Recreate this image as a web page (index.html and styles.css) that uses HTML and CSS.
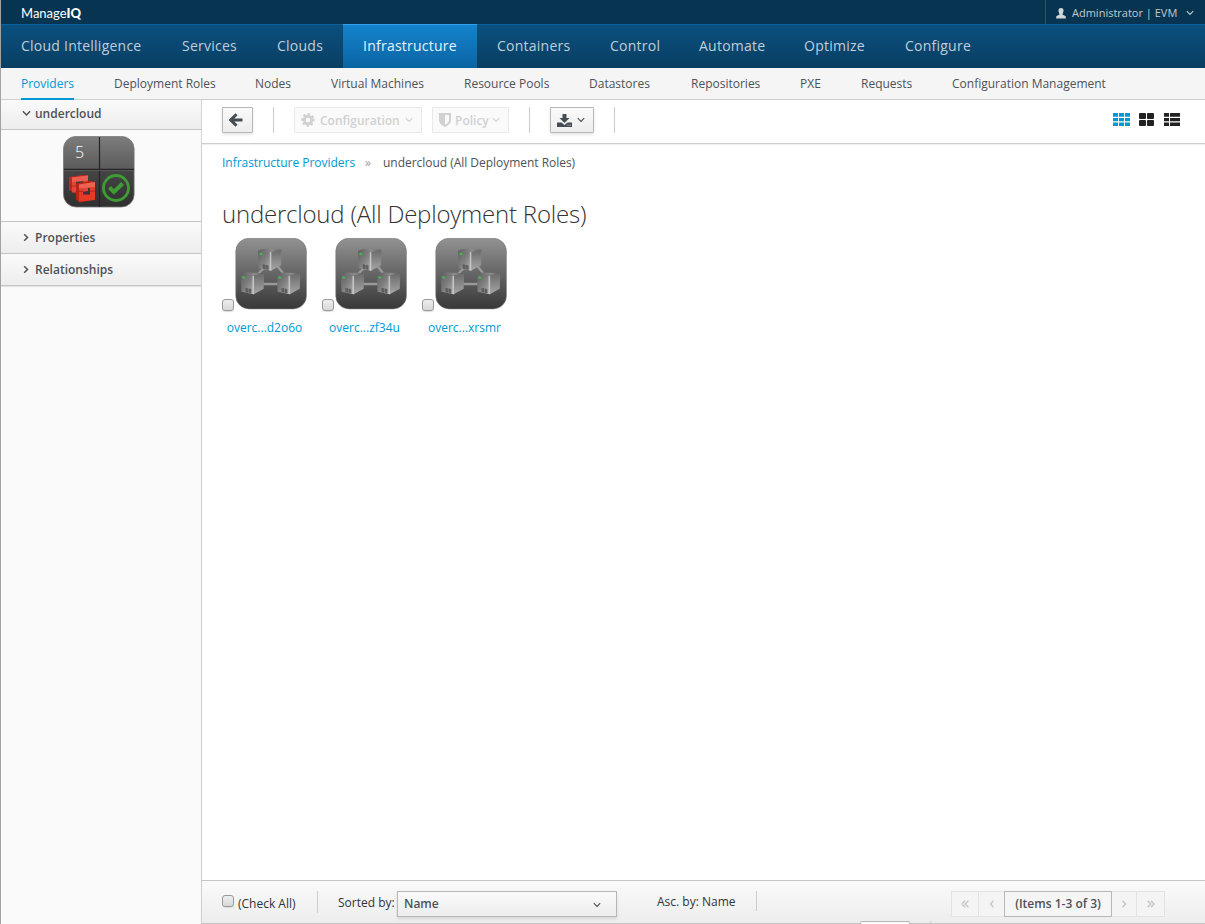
FILE: index.html
```
<!DOCTYPE html>
<html lang="en">
<head>
<meta charset="utf-8">
<title>ManageIQ</title>
<link rel="stylesheet" href="styles.css">
</head>
<body>
<svg class="defs" width="0" height="0" aria-hidden="true">
  <defs>
    <linearGradient id="tile" x1="0" y1="0" x2="0" y2="1"><stop offset="0" stop-color="#929292"/><stop offset=".5" stop-color="#656565"/><stop offset="1" stop-color="#383838"/></linearGradient>
    <linearGradient id="quad" x1="0" y1="0" x2="0" y2="1"><stop offset="0" stop-color="#7d7d7d"/><stop offset=".46" stop-color="#5b5b5b"/><stop offset=".48" stop-color="#454545"/><stop offset="1" stop-color="#303030"/></linearGradient>
    <linearGradient id="front" x1="0" y1="0" x2="1" y2="1"><stop offset="0" stop-color="#606060"/><stop offset=".5" stop-color="#808080"/><stop offset="1" stop-color="#b4b4b4"/></linearGradient>
    <linearGradient id="side" x1="0" y1="0" x2="0" y2="1"><stop offset="0" stop-color="#6a6a6a"/><stop offset="1" stop-color="#a6a6a6"/></linearGradient>
    <linearGradient id="lid" x1="0" y1="0" x2="1" y2="0"><stop offset="0" stop-color="#5c5c5c"/><stop offset=".6" stop-color="#8c8c8c"/><stop offset="1" stop-color="#5a5a5a"/></linearGradient>
    <symbol id="chev-down" viewBox="0 0 8 6"><path d="M.8 1.200 4 4.400 7.200 1.200" fill="none" stroke="currentColor" stroke-width="1.100"/></symbol>
    <symbol id="chev-right" viewBox="0 0 6 8"><path d="M1.200.8 4.500 4 1.200 7.200" fill="none" stroke="currentColor" stroke-width="1.500"/></symbol>
    <symbol id="server" viewBox="0 0 24 23">
      <path d="M0 2 6 0 23.500 1 13 3.500z" fill="url(#lid)"/>
      <path d="M0 2 13 3.500V22L.8 19.500z" fill="url(#front)"/>
      <path d="M13 3.500 23.500 1 23 16.500 13 22z" fill="url(#side)"/>
      <path d="M11.800 3.400 13.300 3.600V22l-1.500-.3z" fill="#c6c6c6"/>
      <path d="M5 16l2.200.4v3.600L5 19.500zM8.200 16.600l2 .4v3.700l-2-.4z" fill="#666" stroke="#4d4d4d" stroke-width=".5"/>
      <path d="M1.500 4 4.200 4.400v2L1.500 6z" fill="#3cc247"/>
    </symbol>
    <symbol id="role" viewBox="0 0 72 72">
      <rect x=".8" y=".3" width="70.600" height="70.600" rx="13" fill="url(#tile)" stroke="#777" stroke-width=".6"/>
      <path d="M23 36 31 28M40 25 48 35M28 46H43" stroke="#999" stroke-width="2.400"/>
      <use href="#server" x="23" y="10.700" width="24" height="23"/>
      <use href="#server" x="5.700" y="34.300" width="24" height="23"/>
      <use href="#server" x="41.800" y="34.300" width="24" height="23"/>
    </symbol>
  </defs>
</svg>
<div class="app">
  <header class="topbar">
    <div class="brand">Manage<b>IQ</b></div>
    <div class="user">
      <svg width="10" height="11" viewBox="0 0 10 11"><path d="M5 0c1.800 0 2.700 1.200 2.500 3-.1 1.700-.9 2.500-1 3.300 0 1 2.500 1 3.300 2.200V10.500H.2V8.500C1 7.300 3.500 7.300 3.500 6.300 3.400 5.500 2.600 4.700 2.500 3 2.300 1.200 3.200 0 5 0z" fill="#d0d5d9"/></svg>
      <span class="uname">Administrator | EVM</span>
      <svg width="8" height="6"><use href="#chev-down"/></svg>
    </div>
  </header>
  <nav class="mainnav">
    <a>Cloud Intelligence</a><a>Services</a><a>Clouds</a><a class="on">Infrastructure</a><a>Containers</a><a>Control</a><a>Automate</a><a>Optimize</a><a>Configure</a>
  </nav>
  <nav class="subnav">
    <a class="on">Providers</a><a>Deployment Roles</a><a>Nodes</a><a>Virtual Machines</a><a>Resource Pools</a><a>Datastores</a><a>Repositories</a><a>PXE</a><a>Requests</a><a>Configuration Management</a>
  </nav>
  <div class="body">
    <aside class="side">
      <div class="acc first"><svg width="9" height="7" viewBox="0 0 8 6"><path d="M.8 1 4 4.300 7.200 1" fill="none" stroke="currentColor" stroke-width="1.300"/></svg>undercloud</div>
      <div class="summary">
        <svg width="72" height="73" viewBox="0 0 72 73">
          <rect x=".5" y=".4" width="70.600" height="70.600" rx="12.500" fill="url(#quad)" stroke="#777" stroke-width=".8"/>
          <path d="M36.500 1V71M1 33.300H71" stroke="#242424" stroke-width="1.200"/><path d="M1 34.500H71" stroke="#666" stroke-width=".6"/>
          <text class="count" x="12" y="22">5</text>
          <g fill-rule="evenodd">
            <path d="M6 41 21 38.700 25 40V55L12 57.500 6 54z M12 45V51.500H20V45z" fill="#b92b1d"/>
            <path d="M9 41.500 25 39.500V55L9 56.500z M13 45.500V52H20.500V45z" fill="#e0463a"/>
            <path d="M9 41.500 25 39.500V44.500L9 46z" fill="#ec5c50"/>
            <path d="M13 47.500 28 44.800 32 46V63.500L17 66.500 13 63.500z M19.500 51.500V58.500H27V51.500z" fill="#b92615"/>
            <path d="M16 48.500 32 46V64L16 65.500z M20 52V58.800H27V51.500z" fill="#e43b28"/>
            <path d="M16 48.500 32 46V51L16 52.500z" fill="#ee6255"/>
            <path d="M13 55.500H20M27 55.200H32M6 50H13" stroke="#a3281b" stroke-width=".8"/>
          </g>
          <circle cx="53" cy="52" r="12.500" fill="none" stroke="#3f9c35" stroke-width="2.800"/>
          <path d="M46.500 51.500 51 56 59.500 47.500" fill="none" stroke="#3f9c35" stroke-width="4"/>
        </svg>
      </div>
      <div class="acc"><svg width="6" height="9" viewBox="0 0 6 8"><use href="#chev-right"/></svg>Properties</div>
      <div class="acc last"><svg width="6" height="9" viewBox="0 0 6 8"><use href="#chev-right"/></svg>Relationships</div>
    </aside>
    <main class="main">
      <div class="toolbar">
        <button class="btn back"><svg width="14" height="14" viewBox="0 0 14 14"><path d="M7.500 1.200 1.700 7 7.500 12.800M2 7H13.500" fill="none" stroke="#464c53" stroke-width="3"/></svg></button>
        <i class="sep s1"></i>
        <button class="btn off config"><svg width="14" height="14" viewBox="0 0 14 14"><g fill="none" stroke="#d1d1d1"><circle cx="7" cy="7" r="3.700" stroke-width="3"/><circle cx="7" cy="7" r="5.700" stroke-width="2.200" stroke-dasharray="2.400 2.077" transform="rotate(-12 7 7)"/></g></svg><span>Configuration</span><svg width="8" height="6"><use href="#chev-down"/></svg></button>
        <button class="btn off policy"><svg width="12" height="14" viewBox="0 0 12 14"><path fill-rule="evenodd" d="M0 0H12V7C12 10.500 9 12.500 6 14 3 12.500 0 10.500 0 7z M6 2V11.700C8.500 10.400 10 9 10 7V2z" fill="#d1d1d1"/></svg><span>Policy</span><svg width="8" height="6"><use href="#chev-down"/></svg></button>
        <i class="sep s2"></i>
        <button class="btn down"><svg width="15" height="13" viewBox="0 0 15 13"><path d="M5.500 0H9.500V4H12.500L7.500 9 2.500 4H5.500zM0 8.500H4.500L7.500 11 10.500 8.500H15V13H0z" fill="#464c53"/><path d="M10.500 11.200h1M12.700 11.200h1" stroke="#ddd"/></svg><svg width="8" height="6"><use href="#chev-down"/></svg></button>
        <i class="sep s3"></i>
        <div class="views">
          <svg class="blue" width="17" height="13" viewBox="0 0 17 13"><path d="M0 0h5v3.700H0zm6 0h5v3.700H6zm6 0h5v3.700h-5zM0 5h5v3.200H0zm6 0h5v3.200H6zm6 0h5v3.200h-5zM0 9.400h5V13H0zm6 0h5V13H6zm6 0h5V13h-5z"/></svg>
          <svg width="15" height="13" viewBox="0 0 15 13"><rect width="7" height="6" rx="1"/><rect x="8" width="7" height="6" rx="1"/><rect y="7" width="7" height="6" rx="1"/><rect x="8" y="7" width="7" height="6" rx="1"/></svg>
          <svg width="16" height="13" viewBox="0 0 16 13"><path d="M0 0h5v3.700H0zm6 0h10v3.700H6zM0 5h5v3.200H0zm6 0h10v3.200H6zM0 9.400h5V13H0zm6 0h10V13H6z"/></svg>
        </div>
      </div>
      <div class="crumbs"><a>Infrastructure Providers</a><span class="raquo">»</span><span class="here">undercloud (All Deployment Roles)</span></div>
      <h1>undercloud (All Deployment Roles)</h1>
      <div class="grid">
        <div class="item"><div class="pic"><i class="check"></i><svg width="72" height="72"><use href="#role"/></svg></div><a>overc...d2o6o</a></div>
        <div class="item"><div class="pic"><i class="check"></i><svg width="72" height="72"><use href="#role"/></svg></div><a>overc...zf34u</a></div>
        <div class="item"><div class="pic"><i class="check"></i><svg width="72" height="72"><use href="#role"/></svg></div><a>overc...xrsmr</a></div>
      </div>
      <footer class="pager">
        <i class="check"></i><span class="all">(Check All)</span>
        <i class="fsep f1"></i>
        <span class="sorted">Sorted by:</span>
        <div class="select"><span>Name</span><svg width="8" height="6"><use href="#chev-down"/></svg></div>
        <span class="asc">Asc. by: Name</span>
        <i class="fsep f2"></i>
        <div class="pages">
          <span class="pg"><svg width="8" height="8" viewBox="0 0 8 8"><path d="M4 .8 1 4 4 7.200M7.300.8 4.300 4 7.300 7.200"/></svg></span>
          <span class="pg narrow"><svg width="6" height="8" viewBox="0 0 6 8"><path d="M4.500.8 1.500 4 4.500 7.200"/></svg></span>
          <span class="range">(Items 1-3 of 3)</span>
          <span class="pg next"><svg width="6" height="8" viewBox="0 0 6 8"><path d="M1.500.8 4.500 4 1.500 7.200"/></svg></span>
          <span class="pg final"><svg width="8" height="8" viewBox="0 0 8 8"><path d="M.7.8 3.700 4 .7 7.200M4 .8 7 4 4 7.200"/></svg></span>
        </div>
        <i class="peek"></i><i class="peek-line"></i>
      </footer>
    </main>
  </div>
</div>
</body>
</html>
```
FILE: styles.css
```
* { box-sizing: border-box; }
body { margin: 0; font: 12px/16px "Open Sans", sans-serif; color: #4d5258; background: #fff; }
.defs { position: absolute; }
svg { display: block; flex: none; }
span, a { white-space: nowrap; }
.app { height: 924px; display: flex; flex-direction: column; border-left: 1px solid #a2a2a2; overflow: hidden; }

.topbar { height: 24px; flex: none; background: #073450; display: flex; justify-content: space-between; }
.brand { font: 400 13px/18px Lato, sans-serif; color: #fff; padding: 4px 0 0 20px; }
.brand b { font-weight: 900; }
.user { width: 160px; border-left: 1px solid #0c5c8d; display: flex; align-items: center; color: #c3cbd1; font-size: 11px; padding: 2px 0 0 10px; }
.uname { width: 107px; margin: 0 7px 0 6px; }

.mainnav { height: 44px; flex: none; display: grid; grid-template-columns: 161px 95px 86px 134px 113px 89px 105px 101px 1fr; border-top: 1px solid #0b619a; background: linear-gradient(#0a5080, #093e61); }
.mainnav a { padding: 0 20px; font-size: 14px; line-height: 42px; letter-spacing: .24px; color: #c0ced8; }
.mainnav a.on { color: #e9f2f8; margin-top: -1px; border-top: 1px solid #31a2e9; background: linear-gradient(#1483cd, #0a64a2); }

.subnav { height: 32px; flex: none; display: grid; grid-template-columns: 93px 141px 76px 133px 125px 102px 109px 61px 91px 1fr; padding-left: 20px; background: #f5f5f5; border-bottom: 1px solid #cecece; }
.subnav a { line-height: 31px; justify-self: start; height: 32px; }
.subnav a.on { color: #0099d3; border-bottom: 2px solid #0099d3; width: 53px; }

.body { flex: 1; display: flex; min-height: 0; }
.side { width: 201px; flex: none; background: #fafafa; border-right: 1px solid #cecece; }
.acc { height: 32px; display: flex; align-items: center; padding-left: 22px; gap: 6px; font-weight: 600; border-top: 1px solid #c4c4c4; background: linear-gradient(#fafafa, #ededed); }
.acc svg[width="9"] { margin-right: -2px; }
.acc.first { height: 30px; padding: 0 0 2px 21px; border-top: 0; border-bottom: 1px solid #c4c4c4; }
.acc.last { height: 33px; border-bottom: 1px solid #c4c4c4; box-shadow: 0 1px 1px #e6e6e6; }
.summary { height: 91px; padding: 6px 0 0 62px; }
.count { font: 300 16px "Open Sans", sans-serif; fill: #fff; }

.main { flex: 1; min-width: 0; display: flex; flex-direction: column; }
.toolbar { height: 44px; flex: none; display: flex; padding: 7px 25px 0 20px; border-bottom: 1px solid #cecece; box-shadow: 0 1px 1px #f0f0f0; }
.btn { height: 26px; display: flex; align-items: center; margin: 0; padding: 0 6px; border: 1px solid #b7b7b7; border-radius: 1px; background: linear-gradient(#fafafa, #ededed); box-shadow: 0 2px 3px rgba(3,3,3,.1); font: 600 12px "Open Sans", sans-serif; color: #4d5258; }
.back { width: 31px; }
.off { background: #fafafa; border-color: #e9e9e9; color: #d1d1d1; box-shadow: none; }
.config { width: 128px; padding-left: 6px; }
.config span { width: 80px; margin: 0 5px 0 5px; text-align: left; }
.policy { width: 77px; margin-left: 10px; }
.policy span { width: 33px; margin: 0 4px 0 4px; text-align: left; }
.down { width: 44px; gap: 5px; }
.sep { width: 1px; height: 26px; background: #ccc; }
.s1 { margin: 0 20px; }
.s2 { margin: 0 20px; }
.s3 { margin-left: 20px; }
.views { display: flex; margin: 6px -1px 0 auto; gap: 9px; fill: #222; }
.views svg:last-child { margin: 0 1px; }
.blue { fill: #0099d3; }
.crumbs { display: flex; padding: 11px 0 0 20px; height: 49px; letter-spacing: -.03px; }
.crumbs a, .item a { color: #0099d3; }
.crumbs a { width: 133px; }
.raquo { color: #9c9c9c; width: 8px; margin: 0 10px; }
h1 { margin: 0; padding: 4px 0 0 20px; height: 45px; font: 300 24px/33px "Open Sans", sans-serif; letter-spacing: -.21px; color: #333; white-space: nowrap; }
.grid { display: flex; padding-left: 20px; gap: 15px; }
.item { width: 85px; text-align: center; }
.pic { display: flex; align-items: flex-end; gap: 1px; margin-bottom: 10px; }
.check { flex: none; width: 12px; height: 12px; margin-bottom: -1px; border: 1px solid #999; border-radius: 3px; background: linear-gradient(#eee, #d8d8d8); box-shadow: 0 1px 1px #ddd; }

.pager { position: relative; margin-top: auto; height: 44px; display: flex; align-items: flex-start; padding: 10px 40px 0 20px; border-top: 1px solid #c4c4c4; border-bottom: 1px solid #c4c4c4; background: linear-gradient(#fafafa, #ededed); color: #333; }
.pager .check { margin-top: 4px; }
.all { margin: 5px 0 0 4px; width: 59px; }
.fsep { width: 1px; height: 22px; background: #ccc; }
.f1 { margin: 0 20px; }
.sorted { width: 59px; margin-top: 4px; }
.select { width: 220px; height: 26px; display: flex; align-items: center; justify-content: space-between; padding: 0 15px 0 6px; border: 1px solid #b7b7b7; background: linear-gradient(#fafafa, #ededed); box-shadow: 0 2px 3px rgba(3,3,3,.1); font-weight: 600; color: #4d5258; }
.select svg { margin-top: 2px; }
.asc { margin: 3px 0 0 40px; width: 79px; }
.f2 { margin-left: 20px; height: 20px; }
.pages { display: flex; margin-left: auto; font-weight: 600; color: #4d5258; }
.pg { width: 28px; height: 26px; display: flex; align-items: center; justify-content: center; border: 1px solid #e3e3e3; background: #f4f4f4; }
.pg svg { fill: none; stroke: #c6c6c6; stroke-width: 1.4; }
.narrow { width: 25px; border-left: 0; border-right: 0; }
.range { width: 108px; height: 26px; line-height: 24px; text-align: center; border: 1px solid #b7b7b7; background: #f5f5f5; }
.next { width: 24px; border-left: 0; border-right: 0; }
.final { width: 29px; }
.peek { position: absolute; left: 658px; bottom: -1px; width: 50px; height: 3px; background: #fafafa; border: 1px solid #b7b7b7; border-bottom: 0; border-radius: 2px 2px 0 0; }
.peek-line { position: absolute; left: 728px; bottom: -1px; width: 1px; height: 3px; background: #ccc; }
```
